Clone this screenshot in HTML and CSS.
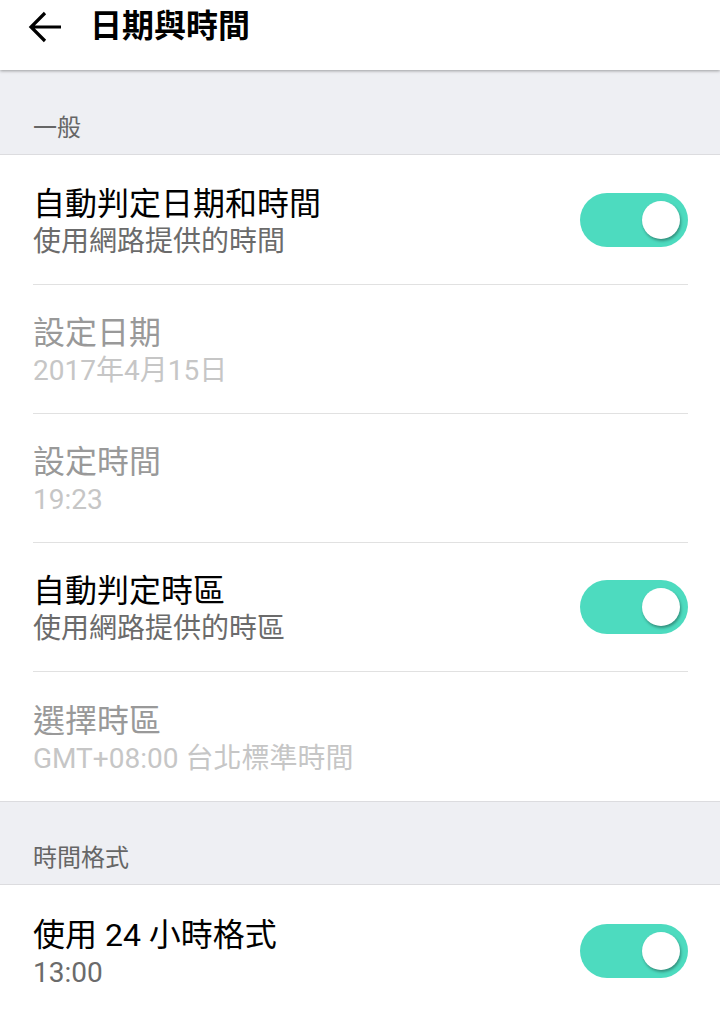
FILE: index.html
```html
<!DOCTYPE html>
<html lang="zh-Hant">
<head>
    <meta charset="UTF-8">
    <meta name="viewport" content="width=device-width, initial-scale=1.0">
    <link rel="stylesheet" href="styles.css">
    <title>日期與時間</title>
</head>
<body>
    <header class="barra">
        <svg class="voltar" width="34" height="32" viewBox="0 0 34 32">
            <path d="M33 16H3M17 2L3 16l14 14" fill="none" stroke="#000" stroke-width="3.2"/>
        </svg>
        <h1>日期與時間</h1>
    </header>

    <div class="secao primeira">一般</div>
    <section class="lista">
        <div class="item">
            <div class="textos">
                <div class="titulo">自動判定日期和時間</div>
                <div class="sub">使用網路提供的時間</div>
            </div>
            <span class="chave"></span>
        </div>
        <div class="item inativo">
            <div class="textos">
                <div class="titulo">設定日期</div>
                <div class="sub">2017年4月15日</div>
            </div>
        </div>
        <div class="item inativo">
            <div class="textos">
                <div class="titulo">設定時間</div>
                <div class="sub">19:23</div>
            </div>
        </div>
        <div class="item">
            <div class="textos">
                <div class="titulo">自動判定時區</div>
                <div class="sub">使用網路提供的時區</div>
            </div>
            <span class="chave"></span>
        </div>
        <div class="item inativo ultimo">
            <div class="textos">
                <div class="titulo">選擇時區</div>
                <div class="sub">GMT+08:00 台北標準時間</div>
            </div>
        </div>
    </section>

    <div class="secao">時間格式</div>
    <section class="lista">
        <div class="item ultimo">
            <div class="textos">
                <div class="titulo">使用 24 小時格式</div>
                <div class="sub">13:00</div>
            </div>
            <span class="chave"></span>
        </div>
    </section>
</body>
</html>
```

FILE: styles.css
```css
body {
    margin: 0;
    background-color: #ffffff;
    font-family: Roboto, "Noto Sans CJK TC", sans-serif;
    overflow: hidden;
}

.barra {
    height: 70px;
    display: flex;
    align-items: center;
    padding: 0 0 18px 28px;
    background-color: #ffffff;
    box-shadow: 0 1px 3px rgba(0, 0, 0, 0.35);
    position: relative;
    z-index: 1;
    box-sizing: border-box;
}

.voltar {
    display: block;
    margin-top: 2px;
}

.barra h1 {
    margin: 0 0 0 28px;
    font-size: 32px;
    font-weight: bold;
    color: #000000;
    line-height: 40px;
}

.secao {
    height: 84px;
    box-sizing: border-box;
    background-color: #eeeff3;
    border-top: 1px solid #dcdcdf;
    border-bottom: 1px solid #dcdcdf;
    display: flex;
    align-items: flex-end;
    padding: 0 0 12px 33px;
    font-size: 24px;
    line-height: 28px;
    color: #666666;
}

.secao.primeira {
    height: 85px;
    border-top: none;
}

.lista {
    padding-top: 1px;
}

.item {
    height: 129px;
    box-sizing: border-box;
    margin: 0 32px 0 33px;
    border-bottom: 1px solid #e1e1e1;
    display: flex;
    align-items: center;
    justify-content: space-between;
}

.item.ultimo {
    border-bottom: none;
}

.textos {
    padding-top: 4px;
}

.titulo {
    font-size: 32px;
    line-height: 40px;
    color: #000000;
}

.sub {
    font-size: 28px;
    line-height: 36px;
    color: #6b6b6b;
}

.inativo .titulo {
    color: #999999;
}

.inativo .sub {
    color: #c6c6c6;
}

.chave {
    width: 108px;
    height: 54px;
    border-radius: 27px;
    background-color: #4ddbbf;
    position: relative;
}

.chave::after {
    content: "";
    position: absolute;
    width: 38px;
    height: 38px;
    border-radius: 50%;
    background-color: #ffffff;
    right: 8px;
    top: 8px;
    box-shadow: 1px 2px 3px rgba(0, 0, 0, 0.35);
}
```
